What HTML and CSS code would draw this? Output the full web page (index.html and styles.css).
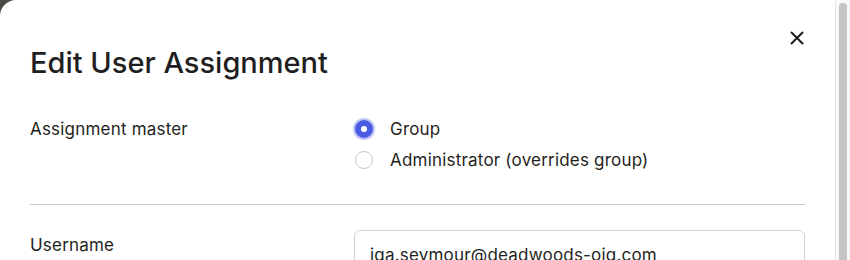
FILE: index.html
```html
<!DOCTYPE html>
<html lang="en">
<head>
    <meta charset="UTF-8">
    <title>Edit User Assignment</title>
    <link rel="stylesheet" href="styles.css">
</head>
<body>
    <div class="modal">
        <div class="modal-inner">
            <header class="modal-header">
                <h1 class="modal-title">Edit User Assignment</h1>
                <button class="close-btn" aria-label="Close">
                    <svg width="14" height="14" viewBox="0 0 14 14">
                        <path d="M1.5 1.5 L12.5 12.5 M12.5 1.5 L1.5 12.5" stroke="#1d1d21" stroke-width="2" stroke-linecap="round"/>
                    </svg>
                </button>
            </header>

            <!-- Assignment master -->
            <div class="form-row">
                <div class="form-label">Assignment master</div>
                <div class="radio-group">
                    <label class="radio">
                        <input type="radio" name="master" checked>
                        <span class="radio-mark"></span>
                        <span>Group</span>
                    </label>
                    <label class="radio">
                        <input type="radio" name="master">
                        <span class="radio-mark"></span>
                        <span>Administrator (overrides group)</span>
                    </label>
                </div>
            </div>

            <hr class="divider">

            <!-- Username -->
            <div class="form-row form-row-input">
                <div class="form-label">Username</div>
                <input class="text-input" type="text" value="iga.seymour@deadwoods-oig.com">
            </div>
        </div>

        <!-- Scrollbar of the modal body -->
        <div class="scrollbar">
            <div class="scrollbar-thumb"></div>
        </div>
    </div>
</body>
</html>
```

FILE: styles.css
```css
/* General */
body, html {
    margin: 0;
    padding: 0;
    font-family: Inter, "Noto Sans", sans-serif;
    color: #1f1f22;
}

body {
    background-color: #4b4b46;
    height: 260px;
    overflow: hidden;
}

/* Modal */
.modal {
    display: flex;
    background-color: #fff;
    height: 260px;
    border-top-left-radius: 16px;
    overflow: hidden;
}

.modal-inner {
    flex: 1;
    padding: 0 30px;
}

/* Scrollbar */
.scrollbar {
    width: 15px;
    background-color: #fafafa;
    border-left: 1px solid #e8e8e8;
    padding: 3px 3px 0 3px;
    box-sizing: border-box;
}

.scrollbar-thumb {
    background-color: #c4c4c4;
    border-radius: 4px 4px 0 0;
    height: 100%;
}

/* Header */
.modal-header {
    display: flex;
    justify-content: space-between;
    align-items: flex-start;
    padding-top: 44px;
}

.modal-title {
    margin: 0;
    font-size: 29px;
    font-weight: 500;
    line-height: 38px;
}

.close-btn {
    background: none;
    border: none;
    padding: 0;
    margin-top: -13px;
    margin-right: 1px;
    cursor: pointer;
}

/* Form rows */
.form-row {
    display: grid;
    grid-template-columns: 324px 1fr;
    margin-top: 36px;
}

.form-label {
    font-size: 17px;
    line-height: 22px;
    letter-spacing: 0.2px;
}

.radio-group {
    display: flex;
    flex-direction: column;
    gap: 9px;
}

.radio {
    display: flex;
    align-items: center;
    gap: 17px;
    font-size: 17px;
    line-height: 22px;
    letter-spacing: 0.2px;
    cursor: pointer;
}

.radio input {
    display: none;
}

.radio-mark {
    width: 18px;
    height: 18px;
    margin-left: 1px;
    border: 1.5px solid #c6c6c6;
    border-radius: 50%;
    box-sizing: border-box;
}

.radio input:checked + .radio-mark {
    border: 6px solid #4a5de2;
    background-color: #fff;
    box-shadow: 0 0 0 2px rgba(74, 93, 226, 0.35);
}

.divider {
    border: none;
    border-top: 1px solid #c8c8cd;
    margin: 33px 0 0 0;
}

.form-row-input {
    margin-top: 25px;
}

.form-row-input .form-label {
    padding-top: 4px;
}

.text-input {
    font-family: Inter, "Noto Sans", sans-serif;
    font-size: 17px;
    letter-spacing: 0.2px;
    color: #1f1f22;
    padding: 13px 15px;
    border: 1px solid #d4d4d8;
    border-radius: 6px;
    line-height: 22px;
    height: 50px;
    box-sizing: border-box;
    width: 100%;
}
```
